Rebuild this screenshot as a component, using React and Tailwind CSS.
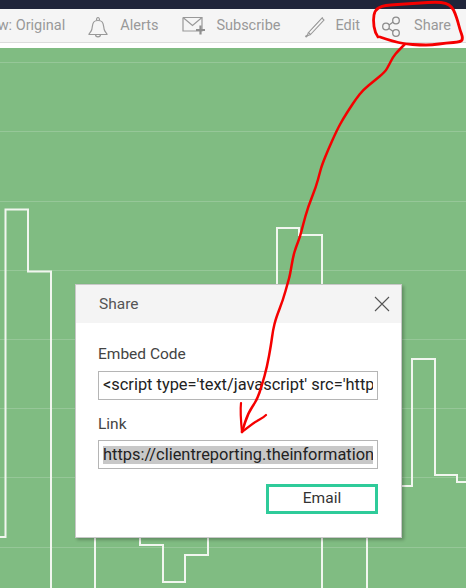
const gridLines = [14, 83, 153, 222, 291, 360, 429, 499];

const loopPoints = [[378, 37], [375, 33], [373, 20], [375, 10], [382, 6], [390, 5], [405, 4], [420, 3], [436, 2], [446, 3], [452, 7], [455, 13], [458, 22], [460, 30], [463, 38], [461, 42], [446, 43], [432, 45], [420, 45], [405, 44], [392, 41], [380, 37]];
const linePoints = [[405, 44], [398, 51], [393, 57], [389, 65], [385, 72], [374, 81], [363, 90], [356, 99], [350, 108], [343, 119], [337, 130], [328, 150], [322, 165], [320, 172], [316, 187], [308, 207], [303, 225], [300, 237], [296, 247], [293, 257], [290, 275], [288, 282], [283, 300], [276, 318], [273, 330], [271, 345], [267, 367], [262, 385], [257, 400], [248, 413], [242, 432]];

// smooth a hand drawn stroke through its points
function smooth(points) {
  let d = `M${points[0][0]} ${points[0][1]}`;
  for (let i = 1; i < points.length - 1; i++) {
    const mx = (points[i][0] + points[i + 1][0]) / 2;
    const my = (points[i][1] + points[i + 1][1]) / 2;
    d += `Q${points[i][0]} ${points[i][1]} ${mx} ${my}`;
  }
  const last = points[points.length - 1];
  return d + `L${last[0]} ${last[1]}`;
}

function ToolbarItem({ icon, label, className = '' }) {
  return (
    <div className={'flex items-center gap-[10px] shrink-0 ' + className}>
      {icon}
      <span>{label}</span>
    </div>
  );
}

function BellIcon() {
  return (
    <svg width="24" height="24" viewBox="0 0 24 24" fill="none" stroke="#999" strokeWidth="1.2">
      <path d="M3 20.500c0-1.200 2-2 2.800-5 .7-2.800.4-5.500 2-7.500 1-1.300 2-1.500 4.200-1.500s3.200.2 4.200 1.500c1.600 2 1.300 4.700 2 7.500.8 3 2.800 3.800 2.800 5z" />
      <path d="M10.500 6.500c0-2 .5-3 1.500-3s1.500 1 1.500 3" />
      <path d="M9.500 20.500c0 1.500 1.200 2.300 2.500 2.300s2.500-.8 2.500-2.300" />
    </svg>
  );
}

function SubscribeIcon() {
  return (
    <svg width="24" height="24" viewBox="0 0 24 24" fill="none" stroke="#999">
      <path d="M1 3.500h19v13.500h-13M1 3.500v13.500h6" strokeWidth="1.200" />
      <path d="M1 3.500l9.500 8 9.500-8" strokeWidth="1.200" />
      <path d="M18.500 11.500v9M14 16h9" strokeWidth="2.200" stroke="#8f8f8f" />
    </svg>
  );
}

function EditIcon() {
  return (
    <svg width="24" height="24" viewBox="0 0 24 24" fill="none" stroke="#999" strokeWidth="1.100">
      <path d="M7.500 18.500l13.500-14.500 2 2-13.500 14.500z" />
      <path d="M9 17l13-14" strokeWidth="0.700" />
      <path d="M7.500 18.500l-1.500 3.500 3.500-1.500" />
      <path d="M4.500 23l1.500-1.500" strokeWidth="1.800" />
    </svg>
  );
}

function ShareIcon() {
  return (
    <svg width="24" height="24" viewBox="0 0 24 24" fill="none" stroke="#8c8c8c" strokeWidth="1.300">
      <circle cx="6" cy="12.500" r="3.300" />
      <circle cx="16" cy="6.500" r="3.300" />
      <circle cx="16" cy="19" r="3.300" />
      <path d="M9 11l4.200-3M9 14.500l4.200 3" />
    </svg>
  );
}

function Chart() {
  return (
    <svg className="w-full h-full block" viewBox="0 0 466 540" fill="none">
      {gridLines.map((y) => (
        <line key={y} x1="0" x2="466" y1={y + 0.5} y2={y + 0.5} stroke="#96c798" strokeWidth="1.200" />
      ))}
      <g stroke="#f1f6ef" strokeWidth="2">
        <path d="M0 489h5.500v-327.500h22.500v62h23v316.500" />
        <path d="M277 250v-70h22v7h23v110" />
        <path d="M95 480v60" />
        <path d="M140 480v17h23v37h22v-27h23v-27" />
        <path d="M322 480v60M367 480v60" />
        <path d="M395 438h17v-127h23v116h22v7h9" />
      </g>
    </svg>
  );
}

function Annotation() {
  return (
    <svg className="absolute inset-0 pointer-events-none" width="466" height="588" viewBox="0 0 466 588" fill="none" stroke="#f50000" strokeLinecap="round" strokeLinejoin="round">
      <path d={smooth(loopPoints)} strokeWidth="2.800" />
      <path d={smooth(linePoints)} strokeWidth="2.500" />
      <path d="M241 403c-1 9 0 19 1 29" strokeWidth="2.200" />
      <path d="M266 415c-3 3-6 4-9 6-5 3-10 7-15 11" strokeWidth="2.200" />
    </svg>
  );
}

function ShareDialog() {
  return (
    <div className="absolute left-[75px] top-[236px] w-[327px] h-[254px] bg-white border border-[#c8c8c8] shadow-[2px_2px_3px_rgba(0,0,0,0.25)] text-[#333]">
      <div className="h-[38px] bg-[#f4f4f4] flex items-center justify-between pl-[23px] pr-[11px] text-[15.5px] text-[#555]">
        <span className="pt-[1px]">Share</span>
        <svg width="16" height="16" viewBox="0 0 16 16" fill="none" stroke="#555" strokeWidth="1.100">
          <path d="M1 1l14 14M15 1l-14 14" />
        </svg>
      </div>
      <div className="flex flex-col pl-[22px] pr-[23px] pt-[21px]">
        <label className="text-[15.5px] leading-[20px] text-[#444]">Embed Code</label>
        <div className="mt-[7px] h-[29px] border border-[#b5b5b5] px-[4px] flex items-center overflow-hidden whitespace-nowrap text-[16.4px] text-[#222]">
          <span className="overflow-hidden">&lt;script type='text/javascript' src='https://clientreporting</span>
        </div>
        <label className="mt-[14px] text-[15.5px] leading-[20px] text-[#444]">Link</label>
        <div className="mt-[6px] h-[29px] border border-[#b5b5b5] px-[4px] flex items-center overflow-hidden whitespace-nowrap text-[16.4px] text-[#222]">
          <span className="overflow-hidden bg-[#c8c8c8] leading-[18px]">https://clientreporting.theinformationlab.co.uk</span>
        </div>
        <button className="self-end mt-[15px] w-[112px] h-[30px] border-[3px] border-[#2fcb9a] bg-white text-[15.5px] text-[#333] flex items-center justify-center">
          Email
        </button>
      </div>
    </div>
  );
}

export default function App() {
  return (
    <div className="relative w-[466px] h-[588px] overflow-hidden flex flex-col bg-white font-['Roboto',sans-serif]">
      <div className="h-[9px] bg-[#20253a] shrink-0" />
      <div className="h-[34px] shrink-0 bg-[#f5f5f5] border-b border-[#dcdcdc] flex items-center justify-end pr-[15px] text-[14.5px] text-[#999] overflow-hidden whitespace-nowrap">
        <span className="shrink-0">View: Original</span>
        <ToolbarItem className="ml-[21px]" icon={<BellIcon />} label="Alerts" />
        <ToolbarItem className="ml-[24px]" icon={<SubscribeIcon />} label="Subscribe" />
        <ToolbarItem className="ml-[21px]" icon={<EditIcon />} label="Edit" />
        <ToolbarItem className="ml-[20px]" icon={<ShareIcon />} label="Share" />
      </div>
      <div className="h-[5px] shrink-0 bg-white" />
      <div className="relative flex-1 bg-[#80bc82]">
        <Chart />
        <ShareDialog />
      </div>
      <Annotation />
    </div>
  );
}
